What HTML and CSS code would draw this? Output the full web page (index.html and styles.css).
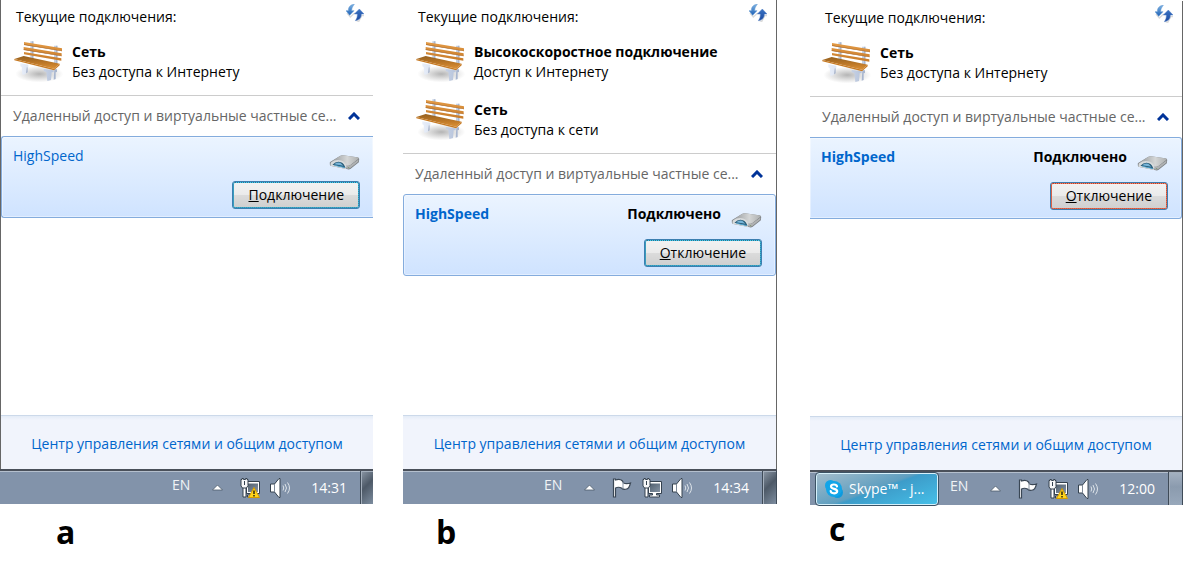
FILE: index.html
```html
<!DOCTYPE html>
<html lang="ru">
<head>
<meta charset="utf-8">
<title>Текущие подключения</title>
<link rel="stylesheet" href="styles.css">
</head>
<body>
<svg class="defs" aria-hidden="true">
  <defs>
    <linearGradient id="wood" x1="0" y1="0" x2="0" y2="1"><stop offset="0" stop-color="#e39a45"/><stop offset="1" stop-color="#c87c2a"/></linearGradient>
    <linearGradient id="seat" x1="0" y1="0" x2="0" y2="1"><stop offset="0" stop-color="#94601f"/><stop offset=".55" stop-color="#bd7828"/><stop offset="1" stop-color="#dc9136"/></linearGradient>
    <linearGradient id="metal" x1="0" y1="0" x2="1" y2="0"><stop offset="0" stop-color="#e9effa"/><stop offset="1" stop-color="#b7c4db"/></linearGradient>
    <linearGradient id="arrowDown" x1="0" y1="0" x2="0" y2="1"><stop offset="0" stop-color="#7fb4e3"/><stop offset="1" stop-color="#1d5fb5"/></linearGradient>
    <linearGradient id="arrowUp" x1="0" y1="0" x2="0" y2="1"><stop offset="0" stop-color="#3b74c4"/><stop offset="1" stop-color="#1c499f"/></linearGradient>
    <linearGradient id="driveTop" x1="0" y1="0" x2="1" y2="0"><stop offset="0" stop-color="#909497"/><stop offset=".6" stop-color="#d4d6d6"/><stop offset="1" stop-color="#aeb0b0"/></linearGradient>
    <linearGradient id="screen" x1="0" y1="0" x2="1" y2="1"><stop offset="0" stop-color="#51606f"/><stop offset="1" stop-color="#8593a3"/></linearGradient>
    <radialGradient id="shade"><stop offset="0" stop-color="#777" stop-opacity=".55"/><stop offset="1" stop-color="#888" stop-opacity="0"/></radialGradient>
  </defs>
  <symbol id="bench" viewBox="42 120 150 129">
    <ellipse cx="118" cy="222" rx="72" ry="25" fill="url(#shade)"/>
    <path d="M91 124h9v54l-9-2zM162 137h10v58l-10-2z" fill="#c3cfe2"/>
    <path d="M97 124h3v54h-3zM169 137h3v58h-3z" fill="#9dabc4"/>
    <path d="M72 126l114 19v8L72 134zM71 141l114 19v8L71 149zM72 156l112 19v7L72 163z" fill="url(#wood)"/>
    <path d="M72 133l114 19v2L72 135zM71 148l114 19v2L71 150z" fill="#a9682a"/>
    <path d="M61 190l24 4v8h-5l-3 21-10 1-2-23-4-2zM131 207l30 4v6h-6l-2 23-11 3-3-27-8-3z" fill="url(#metal)"/>
    <path d="M80 202h3v15l-5 3zM163 208h8v8l-4 1v20l-6 2z" fill="#a8b6cf"/>
    <path d="M43 177l28-9 108 23-17 15z" fill="url(#seat)"/>
    <path d="M43 177l119 29 17-15v5l-17 15-119-30z" fill="#c77b25"/>
  </symbol>
  <symbol id="refresh" viewBox="0 0 54 54">
    <path d="M3 27l10 12 13-12M31 49l7 4 9-18h7" fill="none" stroke="#999" stroke-opacity=".35" stroke-width="4"/>
    <path d="M25 1C13 2 7 9 7 20H0l11 14 13-14h-7C17 12 20 7 25 1z" fill="url(#arrowDown)" stroke="#5b93cf" stroke-width="1.500"/>
    <path d="M28 50c13-2 18-9 18-20h8L40 15 25 30h9c0 9-1 13-6 20z" fill="url(#arrowUp)" stroke="#5581c4" stroke-width="1.500"/>
  </symbol>
  <symbol id="drive" viewBox="0 0 92 46">
    <path d="M1 22L32 3q4-2 9-2l43 6q8 1 7 7l-1 8-25 20q-4 3-9 2L6 34q-5-1-5-5z" fill="#7d8184"/>
    <path d="M2 22L32 3q4-2 9-2l43 6q8 1 4 5L64 31q-4 3-9 2z" fill="url(#driveTop)"/>
    <path d="M4 23q18-12 34-5 12 5 15 17l-2 8-45-9q-4-1-3-6z" fill="#d8dbdc"/>
    <path d="M9 30q12-13 26-8 10 3 14 18z" fill="#275a76"/>
    <path d="M14 28q9-8 19-4l10 9z" fill="#78b5d8"/>
    <path d="M15 31l31 6 1 3-32-7z" fill="#4fa6d3"/>
    <path d="M54 34q7 0 12-4l23-16-1 7-24 19q-4 2-10 2z" fill="#b0b2b3"/>
    <circle cx="59" cy="38" r="1.500" fill="#5e8a3f"/>
  </symbol>
  <symbol id="chevron" viewBox="0 0 12 8"><path d="M1 7L6 2l5 5" fill="none" stroke="#003399" stroke-width="3"/></symbol>
  <symbol id="tri" viewBox="0 0 11 7"><path d="M5.500 1L10.500 6H.5z" fill="#fff" stroke="#4d5a69" stroke-width=".8"/></symbol>
  <symbol id="flag" viewBox="0 0 20 20">
    <path d="M1.500 1h2v1c3-1 5-1 7 1l1 2c2 1 4 1 7 0-1 4-2 6-4 6-3 1-4 0-5-1-2-1-4-1-6 0v9h-2z" fill="#fff" stroke="#3a4755" stroke-width="1.200"/>
    <path d="M11 4v7" stroke="#8996a6"/>
  </symbol>
  <symbol id="net" viewBox="0 0 20 20">
    <path d="M6.500 3.500h13v12h-5v1.500h3v2h-10v-2h3v-1.500h-4z" fill="#fff" stroke="#34414e"/>
    <path d="M8 5.500h10v8.500H8z" fill="url(#screen)"/>
    <path d="M3 9h3v10H3z" fill="#fff" stroke="#34414e"/>
    <path d="M1 1.500h1V.5h1.500v1h2v-1H7v1h1v6L6.500 10h-4L1 8z" fill="#f7f8f9" stroke="#34414e"/>
    <path d="M4.500 3v4" stroke="#34414e"/>
  </symbol>
  <symbol id="warn" viewBox="0 0 12 11">
    <path d="M6 .5L11.500 10.500H.5z" fill="#ffd51c" stroke="#d49b00"/>
    <path d="M6 3.500v3.500M6 8v1.500" stroke="#2b2410" stroke-width="1.500"/>
  </symbol>
  <symbol id="volume" viewBox="0 0 20 20">
    <path d="M.5 6h4L9 .5h1v19H9L4.500 14h-4z" fill="#fff" stroke="#35424f"/>
    <path d="M4.500 6v8" stroke="#7e8a98"/>
    <path d="M13 7.500q1.500 2.500 0 5M15 6q3 4 0 8M17.500 4.500q4 5.500 0 11" fill="none" stroke="#dde3e9"/>
  </symbol>
  <symbol id="skype" viewBox="0 0 18 18">
    <circle cx="5.500" cy="5.500" r="5.500" fill="#12a5e8"/><circle cx="12.500" cy="12.500" r="5.500" fill="#0d9ade"/><circle cx="9" cy="9" r="8" fill="#12a5e8"/>
    <path d="M12 6.500C11.500 3.800 6 3.900 6 6.500c0 3 6.200 1.700 6.200 4.700 0 2.900-6.200 2.800-6.500-.2" fill="none" stroke="#fff" stroke-width="2.200" stroke-linecap="round"/>
  </symbol>
</svg>

<main class="shots">
  <figure class="shot shot-a">
    <section class="flyout">
      <header class="head"><h2 class="title">Текущие подключения:</h2><button class="icon-button" aria-label="Обновить"><svg class="refresh"><use href="#refresh"/></svg></button></header>
      <ul class="networks">
        <li class="network"><svg class="bench"><use href="#bench"/></svg><div><b>Сеть</b><p>Без доступа к Интернету</p></div></li>
      </ul>
      <div class="group"><span>Удаленный доступ и виртуальные частные се...</span><button class="icon-button" aria-label="Свернуть"><svg class="chevron"><use href="#chevron"/></svg></button></div>
      <article class="card">
        <div class="card-row"><span class="conn">HighSpeed</span><svg class="drive"><use href="#drive"/></svg></div>
        <button class="action"><u>П</u>одключение</button>
      </article>
      <footer class="foot"><a href="#">Центр управления сетями и общим доступом</a></footer>
    </section>
    <div class="taskbar">
      <span class="lang">EN</span>
      <svg class="tri"><use href="#tri"/></svg>
      <span class="tray"><span class="net-icon"><svg class="tray-icon"><use href="#net"/></svg><svg class="warn"><use href="#warn"/></svg></span><svg class="tray-icon"><use href="#volume"/></svg></span>
      <time class="clock">14:31</time>
      <button class="desktop" aria-label="Свернуть все окна"></button>
    </div>
    <figcaption class="caption">a</figcaption>
  </figure>

  <figure class="shot shot-b">
    <section class="flyout">
      <header class="head"><h2 class="title">Текущие подключения:</h2><button class="icon-button" aria-label="Обновить"><svg class="refresh"><use href="#refresh"/></svg></button></header>
      <ul class="networks">
        <li class="network"><svg class="bench"><use href="#bench"/></svg><div><b>Высокоскоростное подключение</b><p>Доступ к Интернету</p></div></li>
        <li class="network"><svg class="bench"><use href="#bench"/></svg><div><b>Сеть</b><p>Без доступа к сети</p></div></li>
      </ul>
      <div class="group"><span>Удаленный доступ и виртуальные частные се...</span><button class="icon-button" aria-label="Свернуть"><svg class="chevron"><use href="#chevron"/></svg></button></div>
      <article class="card">
        <div class="card-row"><b class="conn">HighSpeed</b><b>Подключено</b><svg class="drive"><use href="#drive"/></svg></div>
        <button class="action"><u>О</u>тключение</button>
      </article>
      <footer class="foot"><a href="#">Центр управления сетями и общим доступом</a></footer>
    </section>
    <div class="taskbar">
      <span class="lang">EN</span>
      <svg class="tri"><use href="#tri"/></svg>
      <span class="tray"><svg class="tray-icon"><use href="#flag"/></svg><svg class="tray-icon"><use href="#net"/></svg><svg class="tray-icon"><use href="#volume"/></svg></span>
      <time class="clock">14:34</time>
      <button class="desktop" aria-label="Свернуть все окна"></button>
    </div>
    <figcaption class="caption">b</figcaption>
  </figure>

  <figure class="shot shot-c">
    <section class="flyout">
      <header class="head"><h2 class="title">Текущие подключения:</h2><button class="icon-button" aria-label="Обновить"><svg class="refresh"><use href="#refresh"/></svg></button></header>
      <ul class="networks">
        <li class="network"><svg class="bench"><use href="#bench"/></svg><div><b>Сеть</b><p>Без доступа к Интернету</p></div></li>
      </ul>
      <div class="group"><span>Удаленный доступ и виртуальные частные се...</span><button class="icon-button" aria-label="Свернуть"><svg class="chevron"><use href="#chevron"/></svg></button></div>
      <article class="card">
        <div class="card-row"><b class="conn">HighSpeed</b><b>Подключено</b><svg class="drive"><use href="#drive"/></svg></div>
        <button class="action action-hot"><u>О</u>тключение</button>
      </article>
      <footer class="foot"><a href="#">Центр управления сетями и общим доступом</a></footer>
    </section>
    <div class="taskbar">
      <button class="task"><svg class="skype"><use href="#skype"/></svg>Skype™ - j...</button>
      <span class="lang">EN</span>
      <svg class="tri"><use href="#tri"/></svg>
      <span class="tray"><svg class="tray-icon"><use href="#flag"/></svg><span class="net-icon"><svg class="tray-icon"><use href="#net"/></svg><svg class="warn"><use href="#warn"/></svg></span><svg class="tray-icon"><use href="#volume"/></svg></span>
      <time class="clock">12:00</time>
      <button class="desktop desktop-light" aria-label="Свернуть все окна"></button>
    </div>
    <figcaption class="caption">c</figcaption>
  </figure>
</main>
</body>
</html>
```
FILE: styles.css
```css
* { box-sizing: border-box; }
body { margin: 0; background: #fff; color: #000; font: 14px/20px "Open Sans", "Noto Sans", sans-serif; }
button { font: inherit; margin: 0; padding: 0; cursor: pointer; }
svg { display: block; flex: none; }
p, h2, ul, figure { margin: 0; padding: 0; }
.defs { position: absolute; width: 0; height: 0; }

.shots { display: grid; grid-template-columns: 373fr 374fr 376fr; column-gap: 30px; padding-right: 1px; min-height: 100vh; }
.shot { display: flex; flex-direction: column; min-width: 0; }
.shot-c { padding: 1px 0 0 3px; }

.flyout { flex: 1; display: flex; flex-direction: column; border-right: 1px solid #666; }
.shot-a .flyout { border-right: 0; border-left: 1px solid #666; }
.icon-button { align-self: flex-start; border: 0; background: none; }

.head { display: flex; justify-content: space-between; padding: 4px 9px 0 15px; }
.title { font-size: 14px; font-weight: 400; padding-top: 3px; }
.refresh { width: 18px; height: 18px; }

.networks { list-style: none; display: flex; flex-direction: column; gap: 18px; padding: 15px 12px 13px 13px; border-bottom: 1px solid #ccc; }
.shot-c .networks { padding-left: 12px; }
.network { display: flex; gap: 8px; height: 40px; }
.bench { width: 50px; height: 43px; margin-top: -2px; }

.group { display: flex; justify-content: space-between; align-items: center; height: 40px; padding: 0 13px 0 12px; color: #666; white-space: nowrap; }
.group .icon-button { align-self: center; }
.chevron { width: 12px; height: 8px; }

.card { display: flex; flex-direction: column; gap: 11px; padding: 9px 13px 8px 11px; border: 1px solid #84acdd; border-radius: 3px; background: linear-gradient(#ebf4ff, #cfe3ff); box-shadow: inset 0 0 0 1px rgba(255, 255, 255, .4); }
.shot-a .card { border-right: 0; border-radius: 3px 0 0 3px; }
.shot-c .card { border-left: 0; border-radius: 0 3px 3px 0; }
.card-row { display: flex; gap: 10px; height: 24px; }
.conn { flex: 1; color: #0066cc; }
.drive { width: 31px; height: 15px; align-self: flex-end; }
.action { align-self: flex-end; height: 28px; padding: 0 15px; border: 1px solid #3c7fb1; border-radius: 3px; outline: 1px dotted #3a6f88; outline-offset: -2px; background: linear-gradient(#f2f2f2 0, #ebebeb 48%, #dbdbdb 52%, #cfcfcf 100%); box-shadow: inset 0 0 0 1px #35cdf5; }
.action-hot { outline-color: #d4381e; box-shadow: inset 0 0 0 1px #e08a70; }

.foot { margin-top: auto; padding: 18px 0 15px; border-top: 1px solid #ccd9ea; background: linear-gradient(#e4ecf7, #f1f4fc 4px); text-align: center; }
.foot a { color: #0066cc; text-decoration: none; }

.taskbar { display: flex; align-items: center; justify-content: flex-end; height: 35px; border-top: 2px solid #4a505a; background: #8293aa; box-shadow: inset 0 1px #b4bfcd; color: #fff; }
.lang { padding-bottom: 6px; margin-right: 22px; color: #f0f3f6; }
.tri { width: 11px; height: 7px; margin-right: 17px; }
.tray { display: flex; gap: 10px; margin-right: 21px; }
.tray-icon { width: 20px; height: 20px; }
.net-icon { position: relative; }
.warn { position: absolute; right: 0; bottom: 0; width: 12px; height: 11px; }
.clock { margin-right: 13px; }
.desktop { align-self: stretch; width: 13px; border: 1px solid #3f4b58; border-width: 0 0 0 1px; background: linear-gradient(135deg, #8c98a6, #4d5967 45%, #7d8d9f); box-shadow: inset 1px 1px #a4afbc; }
.shot-b .desktop { width: 15px; border-right-width: 1px; }
.desktop-light { width: 15px; background: linear-gradient(#a5b2c2, #8b9bae 45%, #98a8bb); border-right-width: 1px; }
.task { display: flex; align-items: center; gap: 6px; height: 32px; width: 122px; margin: 0 auto 0 6px; padding: 0 8px; border: 1px solid #d6f1fb; border-radius: 3px; outline: 1px solid #3c5365; color: #fff; white-space: nowrap; background: linear-gradient(160deg, #a3bccb, #5f9fc0 48%, #3d9cc9 52%, #45bfe8); }
.skype { width: 18px; height: 18px; }

.caption { height: 60px; padding: 8px 0 0 56px; font: 700 32px/40px "Open Sans", "Noto Sans", sans-serif; }
.shot-b .caption { padding-left: 33px; }
.shot-c .caption { height: 59px; padding: 4px 0 0 19px; }
```
